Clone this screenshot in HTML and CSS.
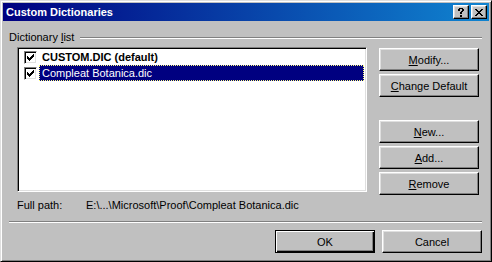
FILE: index.html
```html
<!DOCTYPE html>
<html lang="en">

<head>
    <meta charset="UTF-8">
    <meta name="viewport" content="width=device-width, initial-scale=1.0">
    <title>Custom Dictionaries</title>
    <link rel="stylesheet" href="styles.css">
</head>

<body>
    <div class="window">
        <div class="titlebar">
            <span class="title">Custom Dictionaries</span>
            <div class="caption-btns">
                <button class="cap">
                    <svg width="6" height="9" viewBox="0 0 6 9" shape-rendering="crispEdges">
                        <path d="M1 0h4v1h-4z M0 1h2v2h-2z M4 1h2v2h-2z M3 3h2v1h-2z M2 4h2v2h-2z M2 7h2v2h-2z" fill="#000" />
                    </svg>
                </button>
                <button class="cap">
                    <svg width="8" height="7" viewBox="0 0 8 7" shape-rendering="crispEdges">
                        <path d="M0 0h2v1h-2z M6 0h2v1h-2z M1 1h2v1h-2z M5 1h2v1h-2z M2 2h4v1h-4z M3 3h2v1h-2z M2 4h4v1h-4z M1 5h2v1h-2z M5 5h2v1h-2z M0 6h2v1h-2z M6 6h2v1h-2z" fill="#000" />
                    </svg>
                </button>
            </div>
        </div>

        <div class="content">
            <div class="group-head">
                <span>Dictionary <u>l</u>ist</span>
                <span class="etch grow"></span>
            </div>

            <div class="main">
                <div class="listbox">
                    <div class="item">
                        <span class="check">
                            <svg width="7" height="7" viewBox="0 0 7 7" shape-rendering="crispEdges">
                                <path d="M0 2h1v3h-1z M1 3h1v3h-1z M2 4h1v3h-1z M3 3h1v3h-1z M4 2h1v3h-1z M5 1h1v3h-1z M6 0h1v3h-1z" fill="#000" />
                            </svg>
                        </span>
                        <span class="label bold">CUSTOM.DIC (default)</span>
                    </div>
                    <div class="item">
                        <span class="check">
                            <svg width="7" height="7" viewBox="0 0 7 7" shape-rendering="crispEdges">
                                <path d="M0 2h1v3h-1z M1 3h1v3h-1z M2 4h1v3h-1z M3 3h1v3h-1z M4 2h1v3h-1z M5 1h1v3h-1z M6 0h1v3h-1z" fill="#000" />
                            </svg>
                        </span>
                        <span class="label selected">Compleat Botanica.dic</span>
                    </div>
                </div>

                <div class="side-btns">
                    <button class="btn"><u>M</u>odify...</button>
                    <button class="btn"><u>C</u>hange Default</button>
                    <button class="btn spaced"><u>N</u>ew...</button>
                    <button class="btn"><u>A</u>dd...</button>
                    <button class="btn"><u>R</u>emove</button>
                </div>
            </div>

            <div class="path-row">
                <span class="path-label">Full path:</span>
                <span>E:\...\Microsoft\Proof\Compleat Botanica.dic</span>
            </div>

            <div class="etch"></div>

            <div class="footer">
                <button class="btn default">OK</button>
                <button class="btn">Cancel</button>
            </div>
        </div>
    </div>
</body>

</html>
```

FILE: styles.css
```css
* {
    box-sizing: border-box;
}

body {
    margin: 0;
    font-family: "Liberation Sans", Arial, sans-serif;
    font-size: 11px;
    color: #000;
    background: #c0c0c0;
}

.window {
    width: 492px;
    height: 262px;
    background: #c0c0c0;
    border: 1px solid;
    border-color: #dfdfdf #000 #000 #dfdfdf;
    box-shadow: inset 1px 1px #fff, inset -1px -1px #808080;
    padding: 2px;
}

.titlebar {
    height: 18px;
    display: flex;
    align-items: center;
    justify-content: space-between;
    background: linear-gradient(to right, #000080, #1084d0);
    padding: 0 2px 0 3px;
}

.title {
    color: #fff;
    font-weight: bold;
    font-size: 11px;
}

.caption-btns {
    display: flex;
    gap: 2px;
}

.cap {
    width: 16px;
    height: 14px;
    padding: 0;
    display: flex;
    align-items: center;
    justify-content: center;
    background: #c0c0c0;
    border: 1px solid;
    border-color: #fff #000 #000 #fff;
    box-shadow: inset -1px -1px #808080, inset 1px 1px #dfdfdf;
}

.content {
    padding: 10px 7px 0 6px;
}

.group-head {
    display: flex;
    align-items: center;
    line-height: 13px;
}

.group-head .grow {
    flex: 1;
    margin-left: 6px;
}

.etch {
    height: 2px;
    border-top: 1px solid #808080;
    border-bottom: 1px solid #fff;
}

.main {
    display: flex;
    align-items: flex-start;
    margin-top: 3px;
}

.listbox {
    width: 350px;
    height: 145px;
    margin-left: 8px;
    background: #fff;
    border: 1px solid;
    border-color: #808080 #fff #fff #808080;
    box-shadow: inset 1px 1px #000, inset -1px -1px #dfdfdf;
    padding: 1px 2px 0 6px;
}

.item {
    display: flex;
    align-items: center;
    height: 16px;
}

.check {
    width: 13px;
    height: 13px;
    flex: none;
    display: flex;
    align-items: center;
    justify-content: center;
    background: #fff;
    border: 1px solid;
    border-color: #808080 #fff #fff #808080;
    box-shadow: inset 1px 1px #000, inset -1px -1px #dfdfdf;
    margin-right: 2px;
}

.label {
    flex: 1;
    height: 16px;
    line-height: 14px;
    padding-left: 2px;
    border: 1px solid transparent;
}

.bold {
    font-weight: bold;
}

.selected {
    background: #000080;
    color: #fff;
    border: 1px dotted #ffff80;
}

.side-btns {
    display: flex;
    flex-direction: column;
    gap: 3px;
    width: 100px;
    margin-left: 12px;
    margin-top: 1px;
}

.btn {
    height: 23px;
    width: 100px;
    padding: 0;
    font-family: "Liberation Sans", Arial, sans-serif;
    font-size: 11px;
    color: #000;
    background: #c0c0c0;
    border: 1px solid;
    border-color: #fff #000 #000 #fff;
    box-shadow: inset -1px -1px #808080, inset 1px 1px #dfdfdf;
}

.btn.spaced {
    margin-top: 20px;
}

.btn.default {
    border-color: #000;
    box-shadow: inset 1px 1px #fff, inset -1px -1px #000, inset -2px -2px #808080;
}

.path-row {
    display: flex;
    line-height: 13px;
    margin-top: 4px;
    margin-bottom: 9px;
    padding-left: 8px;
}

.path-label {
    width: 69px;
}

.footer {
    display: flex;
    justify-content: flex-end;
    gap: 7px;
    margin-top: 7px;
}
```
